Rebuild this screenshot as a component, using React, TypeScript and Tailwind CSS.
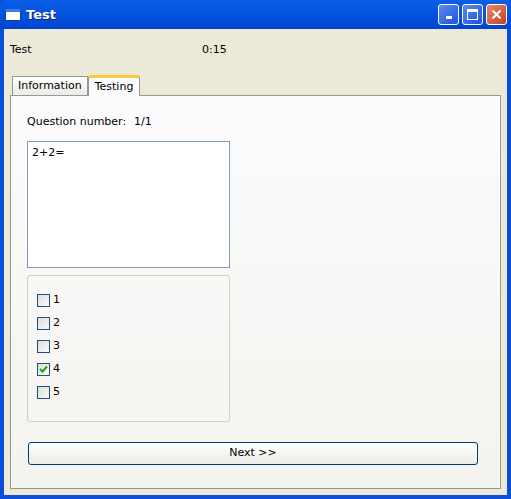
import React from "react";

const CB = ({ n, checked }: { n: number; checked?: boolean }) => (
  <div className="flex items-center h-[13px] gap-[3px]">
    <div className="w-[13px] h-[13px] border border-[#1c5180] bg-gradient-to-br from-[#dcdcd7] to-[#fbfbf9] flex items-center justify-center">
      {checked && (
        <svg width="9" height="9" viewBox="0 0 9 9">
          <path d="M1 4 L3.5 6.5 L8 1.5" stroke="#21a121" strokeWidth="2" fill="none" />
        </svg>
      )}
    </div>
    <span>{n}</span>
  </div>
);

export default function App() {
  return (
    <div className="w-[511px] h-[499px] bg-[#0a4fd8] flex flex-col text-[11px] text-black" style={{ fontFamily: "Tahoma, 'DejaVu Sans', sans-serif" }}>
      <div className="h-[29px] shrink-0 bg-gradient-to-b from-[#0a5ee6] via-[#0453df] to-[#0044cf] rounded-t-[7px] flex items-center pl-[5px] pr-[4px]">
        <div className="w-[16px] h-[12px] bg-white border border-[#1c3b8c] border-t-[3px] border-t-[#3e7be8] mr-[5px]" />
        <span className="text-white font-bold text-[13px] [text-shadow:1px_1px_#0a1f74]">Test</span>
        <div className="ml-auto flex gap-[3px]">
          <div className="w-[21px] h-[21px] rounded-[3px] border border-white bg-gradient-to-br from-[#5a8cf0] to-[#2050d8] flex items-end justify-center pb-[5px]"><div className="w-[6px] h-[3px] bg-white" /></div>
          <div className="w-[21px] h-[21px] rounded-[3px] border border-white bg-gradient-to-br from-[#5a8cf0] to-[#2050d8] flex items-center justify-center"><div className="w-[11px] h-[11px] border border-white border-t-[3px]" /></div>
          <div className="w-[21px] h-[21px] rounded-[3px] border border-white bg-gradient-to-br from-[#e8876a] to-[#c4401c] flex items-center justify-center">
            <svg width="11" height="11" viewBox="0 0 11 11"><path d="M1.5 1.5 L9.5 9.5 M9.5 1.5 L1.5 9.5" stroke="white" strokeWidth="2" /></svg>
          </div>
        </div>
      </div>
      <div className="flex-1 mx-[4px] mb-[4px] bg-[#ece9d8] flex flex-col px-[6px] pt-[15px] pb-[6px]">
        <div className="flex h-[13px] items-center">
          <span className="w-[192px]">Test</span>
          <span>0:15</span>
        </div>
        <div className="flex items-end mt-[17px] h-[21px] pl-[2px]">
          <div className="h-[19px] px-[5px] border border-b-0 border-[#919b9c] bg-gradient-to-b from-white to-[#ecebe5] flex items-center">Information</div>
          <div className="h-[21px] px-[6px] border border-b-0 border-[#919b9c] border-t-[3px] border-t-[#ffc83c] rounded-t-[3px] bg-[#fcfcfe] flex items-start pt-[1px] -mb-px relative z-10">Testing</div>
        </div>
        <div className="flex-1 border border-[#919b9c] bg-gradient-to-b from-[#fcfcfe] to-[#f4f3ee] pl-[16px] pr-[20px] pt-[20px] pb-[16px] flex flex-col">
          <div className="flex h-[13px] items-center">
            <span className="w-[107px]">Question number:</span>
            <span>1/1</span>
          </div>
          <div className="mt-[12px] w-[203px] h-[127px] border border-[#7f9db9] bg-white px-[4px] pt-[3px]">2+2=</div>
          <div className="mt-[7px] w-[203px] h-[147px] border border-[#d0d0bf] rounded-[3px] pl-[9px] pt-[18px] flex flex-col gap-[10px]">
            <CB n={1} />
            <CB n={2} />
            <CB n={3} />
            <CB n={4} checked />
            <CB n={5} />
          </div>
          <div className="mt-[20px] ml-[1px] w-[450px] h-[23px] border border-[#003c74] rounded-[3px] bg-gradient-to-b from-white to-[#ecebe6] flex items-center justify-center">Next &gt;&gt;</div>
        </div>
      </div>
    </div>
  );
}
